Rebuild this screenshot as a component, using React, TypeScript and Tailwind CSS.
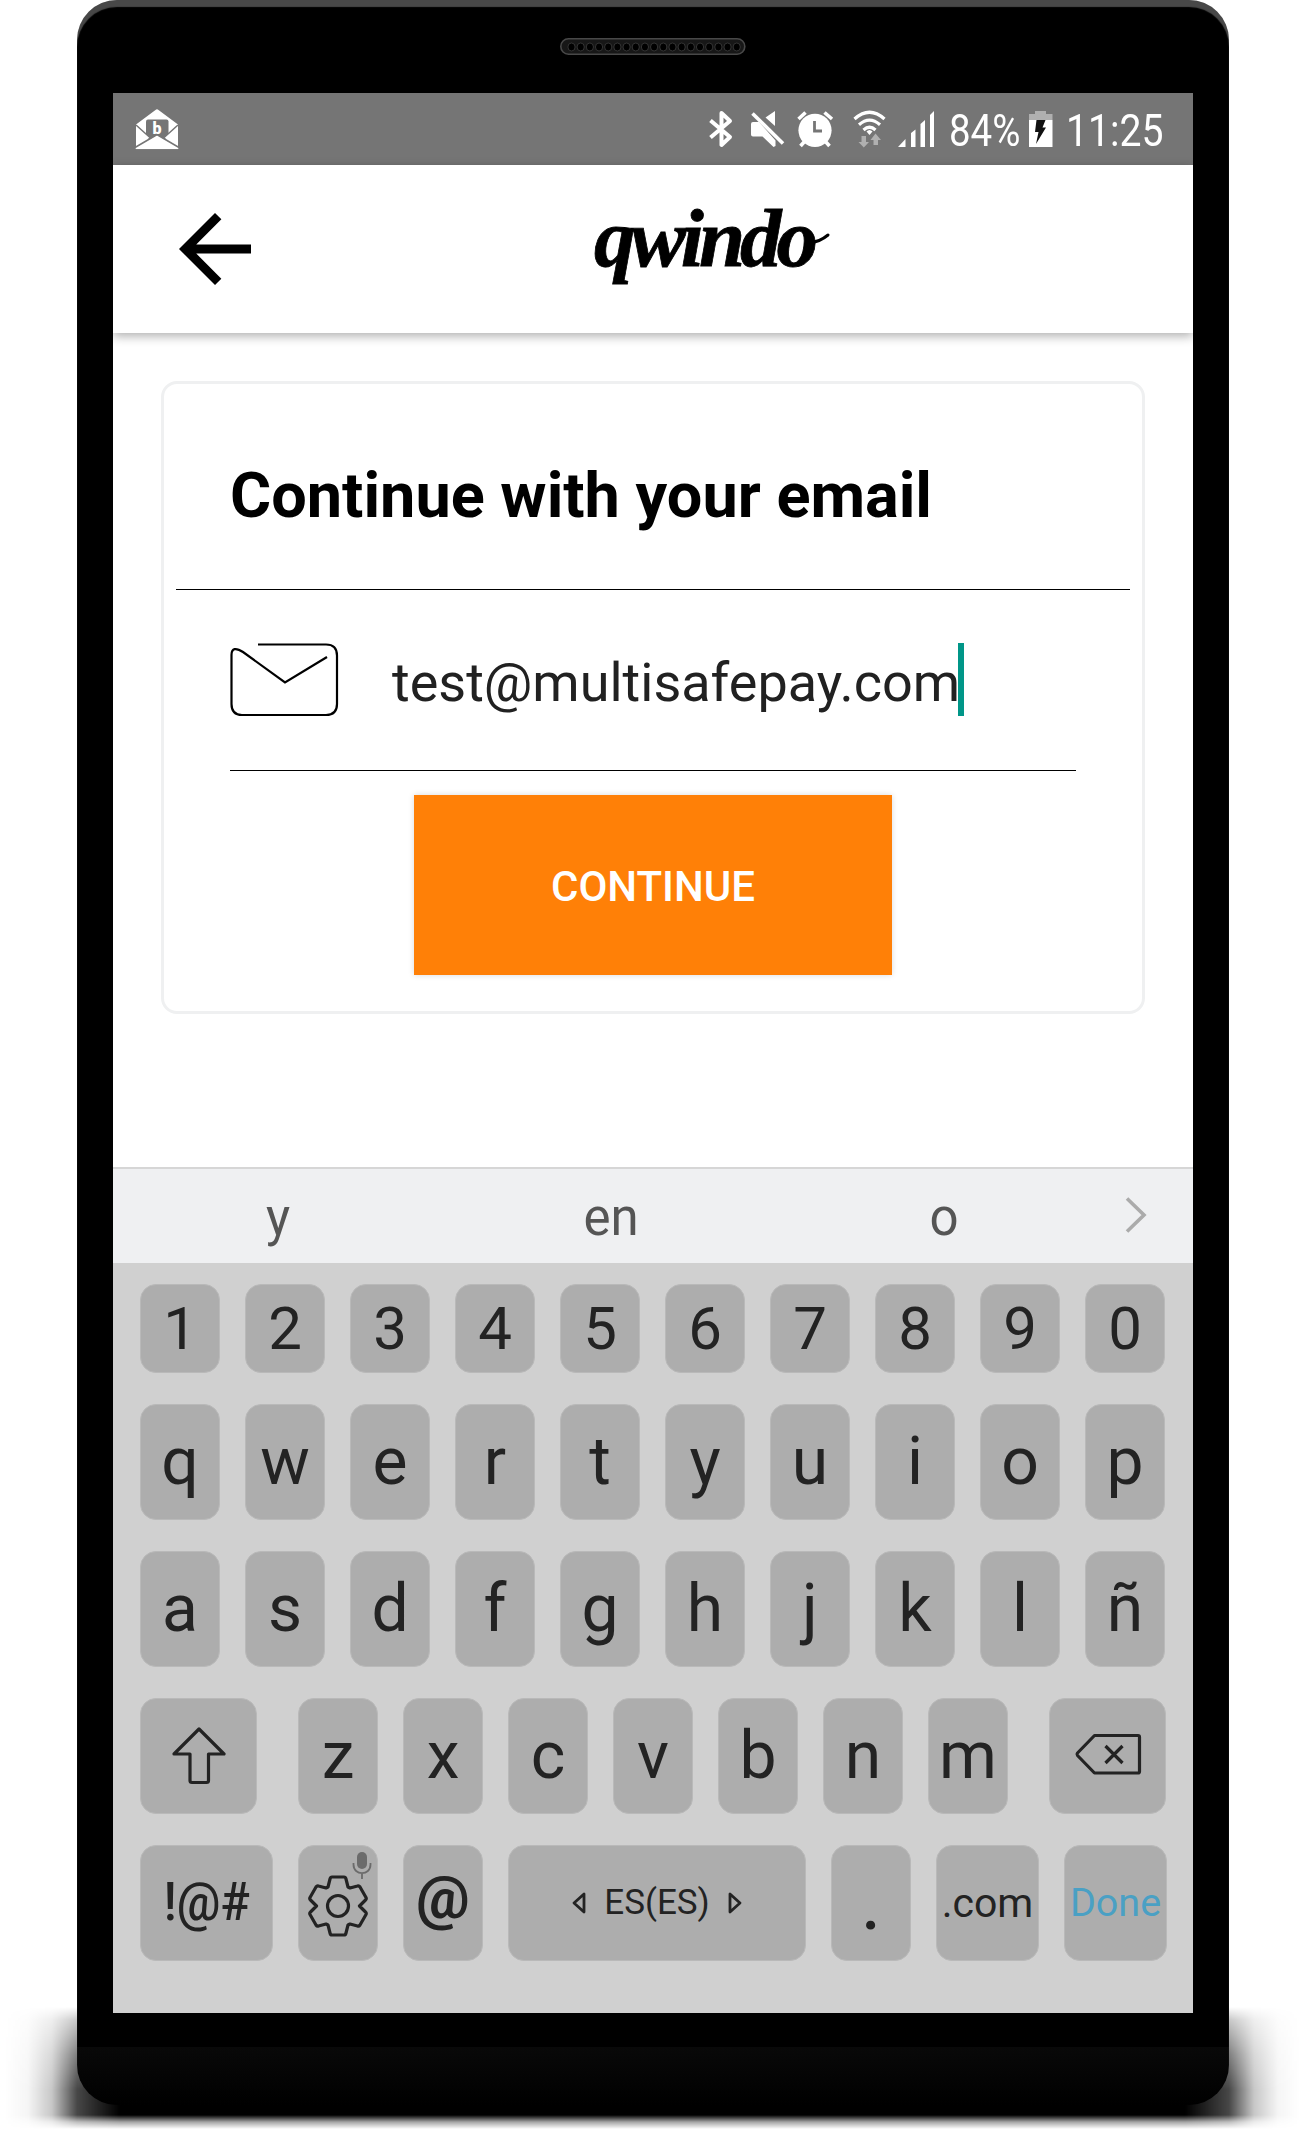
import type { ReactNode } from "react";

function StatusBar() {
  return (
    <div className="flex h-[72px] shrink-0 items-center bg-[#757575]">
      <svg className="ml-[18px] shrink-0" width="52" height="72" viewBox="131 93 52 72">
        <path d="M136 124.500L155.500 110Q157 108.500 158.500 110L178 124.500V147Q178 149 176 149H138Q136 149 136 147Z" fill="#fff" />
        <path d="M146 139V121.500Q146 119.500 148 119.500H166.500Q168.500 119.500 168.500 121.500V139Z" fill="#757575" />
        <path d="M136 125L150 137.500L136 147ZM178 125L164 137.500L178 147Z" fill="#fff" />
        <path d="M136 125L151 138.500M178 125L163 138.500" stroke="#757575" strokeWidth="1.500" />
        <path d="M135 147.500L155.500 135.500Q157 134.500 158.500 135.500L179 147.500V150H135Z" fill="#fff" stroke="#757575" strokeWidth="1.500" />
        <path d="M135 149.300H179V151H135Z" fill="#757575" />
        <text x="157" y="133.500" textAnchor="middle" fill="#fff" fontFamily="Roboto, sans-serif" fontWeight="900" fontSize="16">b</text>
      </svg>
      <svg className="ml-auto shrink-0" width="42" height="72" viewBox="703 93 42 72">
        <path d="M710.500 120.500L730 137L721.500 145V113L730 121L710.500 137.500" fill="none" stroke="#fff" strokeWidth="4" strokeLinejoin="round" />
      </svg>
      <svg className="shrink-0" width="45" height="72" viewBox="745 93 45 72">
        <path d="M775 111V126L765.500 117.500ZM753 122H759L775.500 140.500V146L773.500 147L762.500 136.500H753Q751 136.500 751 134.500V124Q751 122 753 122Z" fill="#fff" />
        <path d="M752.500 113.500L783 143.500" stroke="#fff" strokeWidth="3.600" />
      </svg>
      <svg className="shrink-0" width="55" height="72" viewBox="790 93 55 72">
        <circle cx="815" cy="130.300" r="16.600" fill="#fff" />
        <path d="M798.500 119L805.500 112.500M824.500 112.500L832 119M800.500 146L805 141M829.500 146L825 141" stroke="#fff" strokeWidth="3.600" />
        <path d="M814.500 121V131H822" fill="none" stroke="#757575" strokeWidth="2.800" />
      </svg>
      <svg className="shrink-0" width="50" height="72" viewBox="845 93 50 72">
        <g fill="none" stroke="#fff" strokeWidth="3.200">
          <path d="M854.500 119Q869.500 105.500 884.500 119" />
          <path d="M859 124.800Q869.500 115.500 880 124.800" />
          <path d="M863.500 130Q869.500 124.500 875.500 130" />
        </g>
        <path d="M866.500 131.500Q869.500 128.500 872.500 131.500L869.500 135Z" fill="#fff" />
        <path d="M861.500 136H866V142H869L863.800 147.500L858.500 142H861.500ZM873.500 145H878V140H881L875.500 133.500L870.500 140H873.500Z" fill="#b0b0b0" />
      </svg>
      <svg className="shrink-0" width="45" height="72" viewBox="895 93 45 72">
        <path d="M898 147L905.500 139V147ZM911 147V133L915.500 129.500V147ZM920.500 147V124L925 120V147ZM930 147V115L934 111V147Z" fill="#fff" />
      </svg>
      <div className="w-[84px] shrink-0 pl-[9px] pt-[3px]">
        <span className="block w-max origin-left scale-x-[0.855] text-[45px] leading-[72px] text-white">84%</span>
      </div>
      <svg className="shrink-0" width="36" height="72" viewBox="1024 93 36 72">
        <path d="M1029 120V114H1035V111H1046V114H1052.500V120Z" fill="#b0b0b0" />
        <path d="M1029 120H1052.500V147H1029Z" fill="#fff" />
        <path d="M1036.500 120H1045.500L1042.500 127.500H1046L1036 144L1038.500 132H1035Z" fill="#111" />
      </svg>
      <div className="w-[133px] shrink-0 pl-[6px] pt-[3px]">
        <span className="block w-max origin-left scale-x-[0.87] text-[45px] leading-[72px] text-white">11:25</span>
      </div>
    </div>
  );
}

function Speaker() {
  return (
    <svg className="absolute left-[483px] top-[38px]" width="186" height="17" viewBox="560 38 186 17">
      <rect x="560.800" y="38.800" width="184" height="15.400" rx="7.700" fill="#171717" stroke="#484848" strokeWidth="1.600" />
      {Array.from({ length: 19 }, (_, i) => (
        <ellipse key={i} cx={571.5 + i * 9.18} cy="47" rx="3.600" ry="4" fill="#000" stroke="#3d3d3d" strokeWidth="0.800" />
      ))}
    </svg>
  );
}

function AppBar() {
  return (
    <header className="relative z-10 flex h-[168px] shrink-0 items-start bg-white shadow-[0_3px_10px_rgba(0,0,0,0.32)]">
      <svg className="ml-[48px] mt-[30px] shrink-0" width="108" height="108" viewBox="0 0 24 24">
        <path d="M20 11H7.830l5.590-5.590L12 4l-8 8 8 8 1.410-1.410L7.830 13H20v-2z" fill="#000" />
      </svg>
      <div className="relative ml-[325px] mt-[18px] h-[110px] w-[250px]">
        <span className="block w-max font-['Liberation_Serif',serif] text-[83px] font-bold italic leading-[110px] tracking-[-5px] text-black [-webkit-text-stroke:0.8px_#000]">qwindo</span>
        <svg className="absolute left-[210px] top-[48px]" width="28" height="16" viewBox="0 0 28 16">
          <path d="M3 10.500Q13 13 24 4" fill="none" stroke="#000" strokeWidth="3" strokeLinecap="round" />
        </svg>
      </div>
    </header>
  );
}

function EmailCard() {
  return (
    <section className="mx-[48px] mt-[48px] flex h-[633px] shrink-0 flex-col rounded-[16px] border-[3px] border-[#eff0f1]">
      <h1 className="ml-[66px] mt-[65px] w-max text-[63px] font-bold leading-[94px] text-black">Continue with your email</h1>
      <div className="mx-[12px] mt-[46px] h-px shrink-0 bg-black" />
      <div className="mx-[66px] flex h-[181px] shrink-0 items-start border-b border-black">
        <svg className="mt-[52px] shrink-0" width="110" height="75" viewBox="0 0 110 75">
          <path d="M28 2.500H96Q107 2.500 107 13.500V62Q107 73 96 73H12Q1.500 73 1.500 62V13C1.500 6 6 5.500 13 10L55 40.500L97 15" fill="none" stroke="#000" strokeWidth="2.200" />
        </svg>
        <span className="ml-[52px] mt-[56px] text-[54px] leading-[74px] text-[#212121]">test@multisafepay.com</span>
        <span className="-ml-[2px] mt-[53px] h-[73px] w-[6px] bg-[#009688]" />
      </div>
      <button className="mx-auto mt-[24px] h-[180px] w-[478px] shrink-0 bg-[#ff8007] pt-[3px] text-[42px] font-medium leading-[50px] text-white shadow-[0_0_6px_rgba(0,0,0,0.15)]">
        CONTINUE
      </button>
    </section>
  );
}

function SuggestionBar() {
  return (
    <div className="flex h-[96px] shrink-0 items-center border-t-2 border-[#d6d6d6] bg-[#eff0f2] pl-[42px] text-[51px] leading-[90px] text-[#555]">
      <span className="w-[246px] pt-[3px] text-center">y</span>
      <span className="ml-[87px] w-[246px] pt-[3px] text-center">en</span>
      <span className="ml-[87px] w-[246px] pt-[3px] text-center">o</span>
      <svg className="-mt-[3px] ml-[54px]" width="30" height="40" viewBox="0 0 30 40">
        <path d="M6 3.500L23 20L6 36.500" fill="none" stroke="#ababab" strokeWidth="3.600" />
      </svg>
    </div>
  );
}

const keyBase = "relative flex h-full shrink-0 items-center justify-center rounded-[16px] border border-[#b9b9b9] bg-[#adadad]";

function Key({ className = "w-[80px] text-[#232323]", children }: { className?: string; children: ReactNode }) {
  return <div className={`${keyBase} ${className}`}>{children}</div>;
}

function LetterRow({ letters }: { letters: string }) {
  return (
    <div className="flex h-[116px] shrink-0 gap-[25px] text-[66px] leading-[70px]">
      {letters.split("").map((c) => (
        <Key key={c} className="w-[80px] pb-[1px]">{c}</Key>
      ))}
    </div>
  );
}

function Keyboard() {
  return (
    <div className="flex h-[750px] shrink-0 flex-col gap-[31px] bg-[#d0d0d0] pl-[27px] pt-[21px] text-[#232323]">
      <div className="flex h-[89px] gap-[25px] text-[60px] leading-[70px]">
        {"1234567890".split("").map((c) => (
          <Key key={c}>{c}</Key>
        ))}
      </div>
      <LetterRow letters="qwertyuiop" />
      <LetterRow letters="asdfghjklñ" />
      <div className="flex h-[116px]">
        <Key className="mr-[41px] w-[117px]">
          <svg width="56" height="60" viewBox="0 0 56 60">
            <path d="M28 3L53 28H37.500V54.500Q37.500 56.500 35.500 56.500H21Q19 56.500 19 54.500V28H3Z" fill="none" stroke="#232323" strokeWidth="3.200" strokeLinejoin="round" />
          </svg>
        </Key>
        <LetterRow letters="zxcvbnm" />
        <Key className="ml-[41px] w-[117px]">
          <svg className="-mt-[2px]" width="68" height="44" viewBox="0 0 68 44">
            <path d="M20.500 2.500H64Q65.500 2.500 65.500 4V38.500Q65.500 40 64 40H20.500L3.500 22.500Q2.500 21.300 3.500 20Z" fill="none" stroke="#232323" strokeWidth="3.200" strokeLinejoin="round" />
            <path d="M31.500 13L48.500 30M48.500 13L31.500 30" stroke="#232323" strokeWidth="3.200" />
          </svg>
        </Key>
      </div>
      <div className="flex h-[116px]">
        <Key className="mr-[25px] w-[133px] pb-[3px] text-[53px] font-medium leading-[60px]">
          <span className="scale-x-[0.92]">!@#</span>
        </Key>
        <Key className="mr-[25px] w-[80px]">
          <svg className="mt-[6px] shrink-0" width="60" height="62" viewBox="0 0 60 62">
            <path d="M24 2H36Q37.500 2 38 4L40 12L42 13L49.500 11Q51 10.500 52 12L58 22.500Q58.700 24 57.500 25L51.500 31L57.500 37Q58.700 38 58 39.500L52 50Q51 51.500 49.500 51L42 49L40 50L38 58Q37.500 60 36 60H24Q22.500 60 22 58L20 50L18 49L10.500 51Q9 51.500 8 50L2 39.500Q1.300 38 2.500 37L8.500 31L2.500 25Q1.300 24 2 22.500L8 12Q9 10.500 10.500 11L18 13L20 12L22 4Q22.500 2 24 2Z" fill="none" stroke="#232323" strokeWidth="3.200" strokeLinejoin="round" />
            <circle cx="30" cy="31" r="10.500" fill="none" stroke="#232323" strokeWidth="3.200" />
          </svg>
          <svg className="absolute right-[5px] top-[5px]" width="20" height="30" viewBox="0 0 20 30">
            <rect x="5" y="1" width="10" height="17" rx="5" fill="#6b6b6b" />
            <path d="M1.500 12V13.500C1.500 25 18.500 25 18.500 13.500V12M10 22V28" fill="none" stroke="#6b6b6b" strokeWidth="1.800" />
          </svg>
        </Key>
        <Key className="mr-[25px] w-[80px] pb-[10px] text-[60px] font-bold leading-[60px]">@</Key>
        <Key className="mr-[25px] w-[298px] text-[35px] leading-[50px]">
          <svg width="16" height="24" viewBox="0 0 16 24"><path d="M13 3V21L3 12Z" fill="none" stroke="#232323" strokeWidth="2.800" strokeLinejoin="round" /></svg>
          <span className="mx-[17px]">ES(ES)</span>
          <svg width="16" height="24" viewBox="0 0 16 24"><path d="M3 3V21L13 12Z" fill="none" stroke="#232323" strokeWidth="2.800" strokeLinejoin="round" /></svg>
        </Key>
        <Key className="mr-[25px] w-[80px] pt-[8px] text-[66px] font-medium leading-[70px]">.</Key>
        <Key className="mr-[25px] w-[103px] pb-[1px] text-[41px] leading-[50px]">.com</Key>
        <Key className="w-[103px] text-[39.5px] leading-[50px] text-[#4aa0c4]">Done</Key>
      </div>
    </div>
  );
}

export default function App() {
  return (
    <main className="relative h-[2130px] w-[1305px] overflow-hidden bg-white font-[Roboto,sans-serif]">
      <div className="absolute inset-x-0 bottom-0 h-[125px] bg-[linear-gradient(to_right,transparent_5px,rgba(0,0,0,0.04)_28px,rgba(0,0,0,0.22)_52px,rgba(0,0,0,0.72)_77px,#000_120px,#000_1185px,rgba(0,0,0,0.72)_1229px,rgba(0,0,0,0.22)_1254px,rgba(0,0,0,0.04)_1278px,transparent_1300px)] [mask-image:linear-gradient(to_bottom,transparent_2px,rgba(0,0,0,0.3)_15px,rgba(0,0,0,0.7)_50px,#000_85px,#000_110px,rgba(0,0,0,0.35)_117px,transparent_124px)]" />
      <div className="relative mx-[77px] flex h-[2105px] w-[1152px] flex-col rounded-[40px] bg-black bg-[linear-gradient(to_bottom,#090909,#000)] bg-[length:100%_58px] bg-bottom bg-no-repeat px-[36px] pt-[93px] shadow-[inset_0_7px_1px_#484848]">
        <Speaker />
        <div className="flex h-[1920px] w-[1080px] flex-col overflow-hidden bg-white">
          <StatusBar />
          <AppBar />
          <EmailCard />
          <div className="flex-1" />
          <SuggestionBar />
          <Keyboard />
        </div>
      </div>
    </main>
  );
}
